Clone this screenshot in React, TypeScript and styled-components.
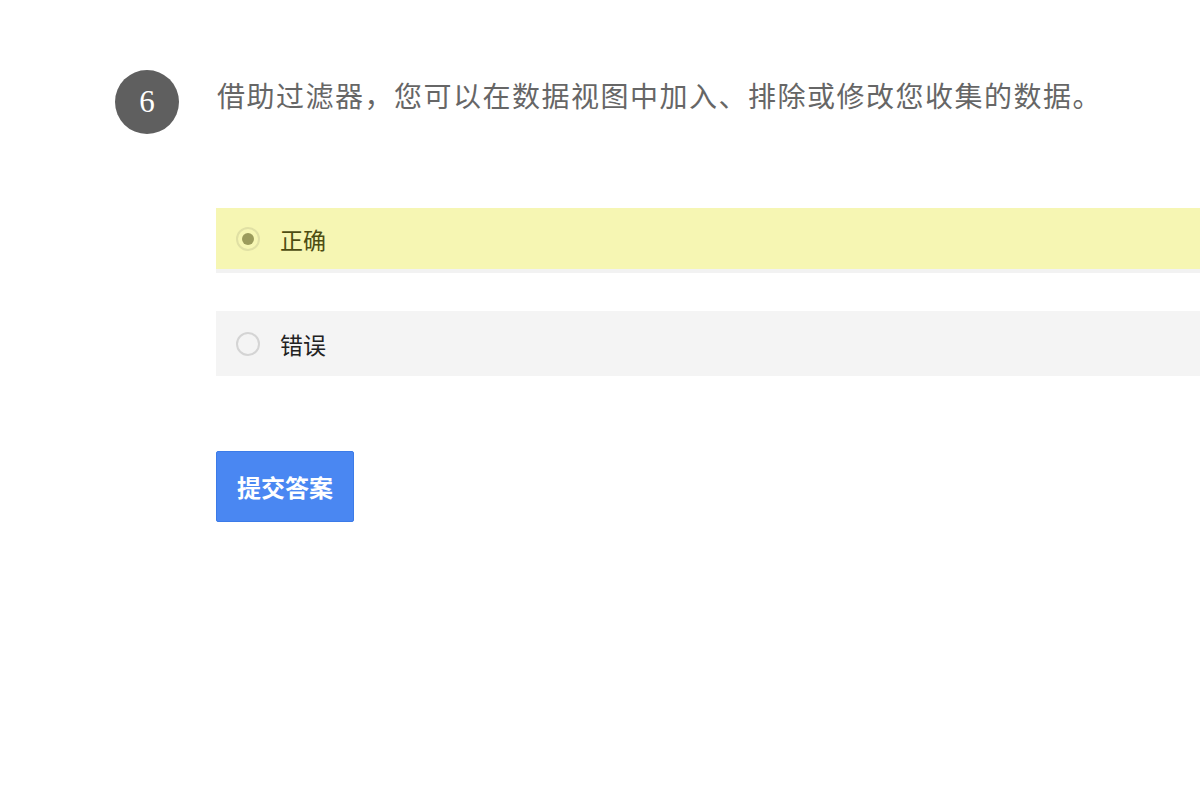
import React from "react";
import styled, { createGlobalStyle } from "styled-components";

const Global = createGlobalStyle`
  html, body { margin: 0; padding: 0; background: #ffffff; overflow: hidden; }
  body { font-family: "Noto Sans CJK SC", "Noto Sans", sans-serif; }
`;

const Page = styled.div`
  width: 1200px;
  height: 800px;
  overflow: hidden;
  padding: 70px 0 0 115px;
  box-sizing: border-box;
`;

const QuestionRow = styled.div`
  display: flex;
  align-items: center;
  gap: 38px;
`;

const Badge = styled.div`
  width: 64px;
  height: 64px;
  border-radius: 50%;
  background: #5f5f5f;
  color: #ffffff;
  display: flex;
  align-items: center;
  justify-content: center;
  font-family: "Liberation Serif", "DejaVu Serif", serif;
  font-size: 31px;
  flex-shrink: 0;
`;

const QuestionText = styled.div`
  font-size: 28px;
  letter-spacing: 1.5px;
  color: #666666;
  margin-top: -14px;
  white-space: nowrap;
`;

const Options = styled.div`
  margin: 74px 0 0 101px;
  display: flex;
  flex-direction: column;
  gap: 38px;
  width: 1100px;
`;

const Option = styled.div<{ $selected?: boolean }>`
  display: flex;
  align-items: center;
  height: ${(p) => (p.$selected ? "61px" : "65px")};
  background: ${(p) => (p.$selected ? "#f6f6b3" : "#f4f4f4")};
  border-bottom: ${(p) => (p.$selected ? "4px solid #f2f2f2" : "none")};
  padding-left: 20px;
  gap: 20px;
`;

const Radio = styled.span<{ $selected?: boolean }>`
  width: 24px;
  height: 24px;
  border-radius: 50%;
  box-sizing: border-box;
  border: 2px solid ${(p) => (p.$selected ? "#e0e0a4" : "#d4d4d4")};
  display: flex;
  align-items: center;
  justify-content: center;
  &::after {
    content: "";
    width: 12px;
    height: 12px;
    border-radius: 50%;
    background: ${(p) => (p.$selected ? "#9b9b5c" : "transparent")};
  }
`;

const Label = styled.span<{ $selected?: boolean }>`
  font-size: 23px;
  color: ${(p) => (p.$selected ? "#4d4d12" : "#222222")};
`;

const Submit = styled.button`
  margin: 75px 0 0 101px;
  width: 138px;
  height: 71px;
  background: #4a87f2;
  border: 1px solid #3c7be8;
  border-radius: 2px;
  color: #ffffff;
  font-family: "Noto Sans CJK SC", sans-serif;
  font-weight: 700;
  font-size: 24px;
  padding: 0;
  cursor: pointer;
  display: block;
`;

export default function App() {
  return (
    <>
      <Global />
      <Page>
        <QuestionRow>
          <Badge>6</Badge>
          <QuestionText>借助过滤器，您可以在数据视图中加入、排除或修改您收集的数据。</QuestionText>
        </QuestionRow>
        <Options>
          <Option $selected>
            <Radio $selected />
            <Label $selected>正确</Label>
          </Option>
          <Option>
            <Radio />
            <Label>错误</Label>
          </Option>
        </Options>
        <Submit>提交答案</Submit>
      </Page>
    </>
  );
}
